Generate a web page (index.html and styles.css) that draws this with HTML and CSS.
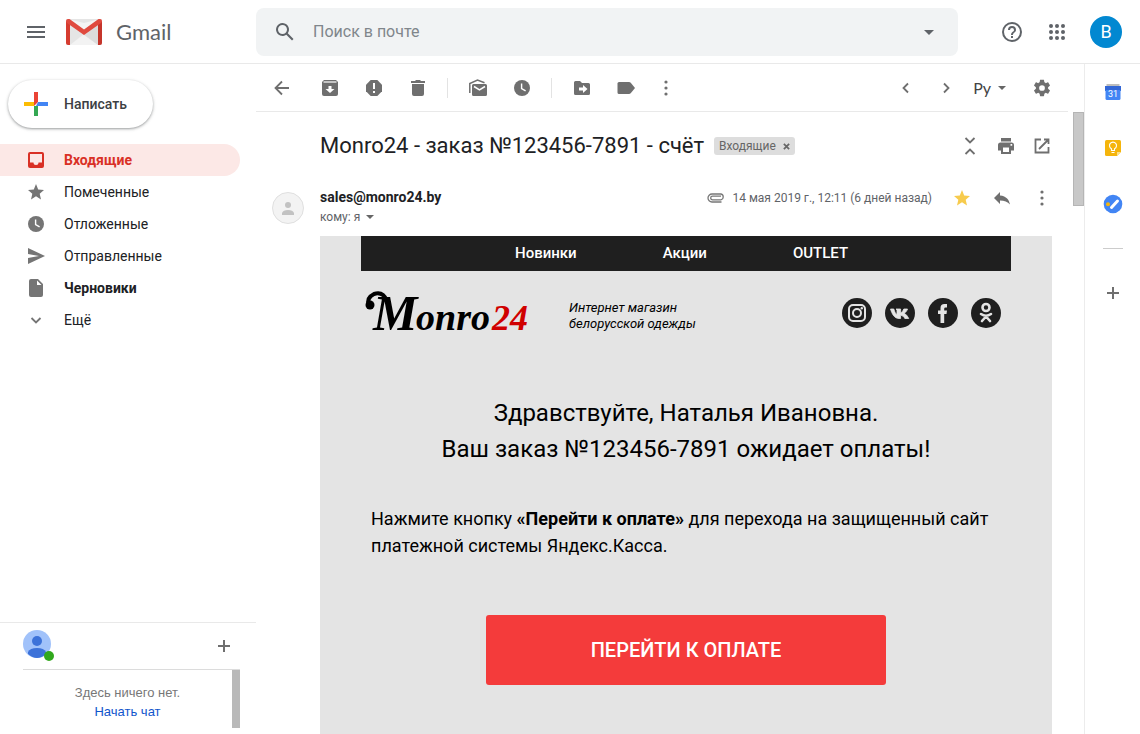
FILE: index.html
```html
<!DOCTYPE html>
<html lang="ru">
<head>
<meta charset="utf-8">
<title>Gmail</title>
<link rel="stylesheet" href="styles.css">
</head>
<body>
<svg class="sprite" aria-hidden="true">
  <symbol id="i-dots" viewBox="0 0 20 20"><circle cx="10" cy="4" r="1.6"/><circle cx="10" cy="10" r="1.6"/><circle cx="10" cy="16" r="1.6"/></symbol>
  <symbol id="i-clock" viewBox="0 0 20 20"><circle cx="10" cy="10" r="8"/><path d="M9.6 5.5v5l4 2.4" fill="none" stroke="#fff" stroke-width="1.4"/></symbol>
  <symbol id="i-star" viewBox="0 0 20 20"><path d="M10 14.300l5 3.200-1.300-5.700L18 8l-5.800-.5L10 2 7.800 7.500 2 8l4.300 3.800L5 17.500z"/></symbol>
  <symbol id="i-caret" viewBox="0 0 10 10"><path d="M1 3h8L5 7z"/></symbol>
  <symbol id="i-plus" viewBox="0 0 20 20"><path d="M9 4h2v5h5v2h-5v5H9v-5H4V9h5z"/></symbol>
</svg>

<header class="header">
  <div class="brand">
    <button class="icon-btn" aria-label="Главное меню"><svg class="icon-24" viewBox="0 0 24 24"><path d="M3 18h18v-2H3v2zm0-5h18v-2H3v2zm0-7v2h18V6H3z"/></svg></button>
    <a class="logo" href="#">
      <svg class="logo-mark" viewBox="0 0 36 26">
        <rect width="36" height="26" rx="2" fill="#e5e5e5"/>
        <path d="M4 26L18 15l14 11z" fill="#f3f3f3"/><path d="M4 6l14 10L32 6v20z" fill="#d8d8d8" opacity=".7"/>
        <path d="M2 0h1.500L18 11 32.500 0H34L18 4z" fill="#f4f4f4"/>
        <path d="M0 2v22a2 2 0 0 0 2 2h2V4z" fill="#d63c30"/><path d="M36 2v22a2 2 0 0 1-2 2h-2V4z" fill="#c5352b"/>
        <path d="M0 2Q0 0 2 0h1.500L18 10.500 32.500 0H34q2 0 2 2 0 1.200-1 2L18 16 1 4Q0 3.200 0 2z" fill="#e04a3f"/>
      </svg>
      <span>Gmail</span>
    </a>
  </div>
  <form class="search">
    <button type="button" class="icon-btn" aria-label="Поиск"><svg class="icon-24" viewBox="0 0 24 24"><path d="M20.500 19l-5.700-5.700A6.500 6.500 0 1 0 13.300 14.800l5.700 5.700 1.500-1.500zM9.500 14a4.500 4.500 0 1 1 0-9 4.500 4.500 0 0 1 0 9z"/></svg></button>
    <input type="text" placeholder="Поиск в почте" aria-label="Поиск в почте">
    <button type="button" class="icon-btn" aria-label="Параметры поиска"><svg class="icon-24" viewBox="0 0 24 24"><path d="M7 10l5 5 5-5z"/></svg></button>
  </form>
  <div class="account">
    <button class="icon-btn" aria-label="Справка"><svg class="icon-24" viewBox="0 0 24 24"><path d="M11 18h2v-2h-2v2zm1-16a10 10 0 1 0 0 20 10 10 0 0 0 0-20zm0 18a8 8 0 1 1 0-16 8 8 0 0 1 0 16zm0-14a4 4 0 0 0-4 4h2a2 2 0 1 1 4 0c0 2-3 1.750-3 5h2c0-2.250 3-2.500 3-5a4 4 0 0 0-4-4z"/></svg></button>
    <button class="icon-btn" aria-label="Приложения"><svg class="icon-24" viewBox="0 0 24 24"><circle cx="6" cy="6" r="2"/><circle cx="12" cy="6" r="2"/><circle cx="18" cy="6" r="2"/><circle cx="6" cy="12" r="2"/><circle cx="12" cy="12" r="2"/><circle cx="18" cy="12" r="2"/><circle cx="6" cy="18" r="2"/><circle cx="12" cy="18" r="2"/><circle cx="18" cy="18" r="2"/></svg></button>
    <button class="avatar">B</button>
  </div>
</header>

<div class="layout">
  <aside class="sidebar">
    <button class="compose">
      <svg class="icon-24" viewBox="0 0 24 24"><path fill="#ea4335" d="M10 0h4v10l-4 4z"/><path fill="#4285f4" d="M14 10h10v4H12z"/><path fill="#34a853" d="M10 14h4v10h-4z"/><path fill="#fbbc04" d="M0 10h10v4H0z"/></svg>
      <span>Написать</span>
    </button>
    <nav class="folders">
      <a class="folder folder-active" href="#"><svg class="icon" viewBox="0 0 20 20"><path fill-rule="evenodd" d="M4 2h12a2 2 0 0 1 2 2v12a2 2 0 0 1-2 2H4a2 2 0 0 1-2-2V4a2 2 0 0 1 2-2zm0 2v8.500h3.500a2.500 2.500 0 0 0 5 0H16V4z"/></svg>Входящие</a>
      <a class="folder" href="#"><svg class="icon"><use href="#i-star"/></svg>Помеченные</a>
      <a class="folder" href="#"><svg class="icon"><use href="#i-clock"/></svg>Отложенные</a>
      <a class="folder" href="#"><svg class="icon" viewBox="0 0 20 20"><path d="M2 2l17 8-17 8v-6l11-2L2 8z"/></svg>Отправленные</a>
      <a class="folder folder-unread" href="#"><svg class="icon" viewBox="0 0 20 20"><path fill-rule="evenodd" d="M5 1h7l5 5v11a2 2 0 0 1-2 2H5a2 2 0 0 1-2-2V3a2 2 0 0 1 2-2zm6 1.500V7h4.500z"/></svg>Черновики</a>
      <a class="folder" href="#"><svg class="icon line-icon" viewBox="0 0 20 20"><path d="M5.500 8l4.500 4.500L14.500 8"/></svg>Ещё</a>
    </nav>
    <section class="chat">
      <div class="chat-head">
        <svg class="chat-avatar" viewBox="0 0 32 32"><circle cx="14" cy="14" r="14" fill="#a1c2fa"/><circle cx="14" cy="11" r="5" fill="#3c72d9"/><path d="M5 24v-2q2-4 9-4t9 4v2q-9 8-18 0z" fill="#3c72d9"/><circle cx="26" cy="26" r="5" fill="#31a81d"/></svg>
        <button class="icon-btn" aria-label="Новый чат"><svg class="icon"><use href="#i-plus"/></svg></button>
      </div>
      <div class="chat-body">
        <p class="chat-empty">Здесь ничего нет.<br><a href="#">Начать чат</a></p>
        <div class="chat-scroll"></div>
      </div>
    </section>
  </aside>

  <main class="content">
    <div class="toolbar">
      <button class="icon-btn tool-back" aria-label="Назад"><svg class="icon line-icon" viewBox="0 0 20 20"><path d="M17 10H4M10 3.500L3.500 10l6.500 6.500"/></svg></button>
      <div class="tool-group">
        <button class="icon-btn" aria-label="В архив"><svg class="icon" viewBox="0 0 20 20"><path d="M4 2h12l2 2v12a2 2 0 0 1-2 2H4a2 2 0 0 1-2-2V4z"/><path d="M8.500 8h3v3h3L10 15l-4.500-4h3z" fill="#fff"/><path d="M3.500 4h13" stroke="#fff" stroke-width="1.200"/></svg></button>
        <button class="icon-btn" aria-label="В спам"><svg class="icon" viewBox="0 0 20 20"><path d="M6.700 2h6.600L18 6.700v6.600L13.300 18H6.700L2 13.300V6.700z"/><path d="M9 5h2v6H9zm0 8h2v2H9z" fill="#fff"/></svg></button>
        <button class="icon-btn" aria-label="Удалить"><svg class="icon" viewBox="0 0 20 20"><path d="M4 6h12v10a2 2 0 0 1-2 2H6a2 2 0 0 1-2-2zM3 3h4l1-1h4l1 1h4v2H3z"/></svg></button>
      </div>
      <div class="tool-group">
        <button class="icon-btn" aria-label="Отметить как непрочитанное"><svg class="icon" viewBox="0 0 20 20"><path d="M5.500 6h12A1.500 1.500 0 0 1 19 7.500v9a1.500 1.500 0 0 1-1.500 1.500h-12A1.500 1.500 0 0 1 4 16.500v-9A1.500 1.500 0 0 1 5.500 6z"/><path d="M6 8.500l5.500 3.300L17 8.500" fill="none" stroke="#fff" stroke-width="1.500"/><path d="M1.800 15V5.500L9.500 2l7 2.800" fill="none" stroke="#6f6f6f" stroke-width="1.500"/></svg></button>
        <button class="icon-btn" aria-label="Отложить"><svg class="icon"><use href="#i-clock"/></svg></button>
      </div>
      <div class="tool-group">
        <button class="icon-btn" aria-label="Переместить"><svg class="icon" viewBox="0 0 20 20"><path d="M3.500 3H8l2 2h6.500A1.500 1.500 0 0 1 18 6.500v9a1.500 1.500 0 0 1-1.500 1.500h-13A1.500 1.500 0 0 1 2 15.500v-11A1.500 1.500 0 0 1 3.500 3z"/><path d="M7 9.500h4V7l4.500 4-4.500 4v-2.500H7z" fill="#fff"/></svg></button>
        <button class="icon-btn" aria-label="Ярлыки"><svg class="icon" viewBox="0 0 20 20"><path d="M3 4h10q1 0 1.700.8L19 10l-4.300 5.200Q14 16 13 16H3q-1.500 0-1.500-1.500v-9Q1.500 4 3 4z"/></svg></button>
      </div>
      <button class="icon-btn tool-more" aria-label="Ещё"><svg class="icon"><use href="#i-dots"/></svg></button>
      <div class="pager">
        <button class="icon-btn" aria-label="Предыдущее"><svg class="icon line-icon" viewBox="0 0 20 20"><path d="M12 5.500L7.500 10l4.500 4.500"/></svg></button>
        <button class="icon-btn" aria-label="Следующее"><svg class="icon line-icon" viewBox="0 0 20 20"><path d="M8 5.500l4.500 4.500L8 14.500"/></svg></button>
      </div>
      <button class="language">Ру<svg class="caret"><use href="#i-caret"/></svg></button>
      <button class="icon-btn" aria-label="Настройки"><svg class="icon" viewBox="1 1 22 22"><path d="M19.430 12.980c.040-.320.070-.640.070-.980s-.030-.660-.070-.980l2.110-1.650c.190-.150.240-.420.120-.640l-2-3.460c-.120-.220-.390-.300-.610-.220l-2.490 1c-.520-.400-1.080-.730-1.690-.980l-.380-2.650C14.460 2.180 14.250 2 14 2h-4c-.250 0-.460.180-.490.420l-.380 2.650c-.610.250-1.170.590-1.690.980l-2.490-1c-.230-.090-.490 0-.610.220l-2 3.460c-.130.220-.070.490.120.640l2.110 1.650c-.040.320-.070.650-.070.980s.030.660.070.980l-2.110 1.650c-.190.150-.240.420-.120.640l2 3.460c.120.220.390.300.610.220l2.490-1c.520.400 1.080.730 1.690.980l.380 2.650c.030.240.240.420.490.420h4c.250 0 .460-.180.490-.420l.380-2.650c.610-.250 1.170-.590 1.690-.980l2.490 1c.230.090.490 0 .610-.220l2-3.460c.120-.220.070-.490-.120-.640l-2.110-1.650zM12 15.500a3.500 3.500 0 1 1 0-7 3.500 3.500 0 0 1 0 7z" transform="translate(1.200 1.200) scale(.9)"/></svg></button>
    </div>

    <div class="mail">
      <article class="thread">
        <div class="subject-row">
          <h1 class="subject">Monro24 - заказ №123456-7891 - счёт</h1>
          <span class="chip">Входящие<button class="chip-close" aria-label="Удалить ярлык"><svg viewBox="0 0 8 8"><path d="M1 1l6 6M7 1L1 7"/></svg></button></span>
          <div class="subject-actions">
            <button class="icon-btn" aria-label="Свернуть"><svg class="icon line-icon" viewBox="0 0 20 20"><path d="M5.500 2l4.500 4.500L14.500 2M5.500 18l4.500-4.500 4.500 4.500"/></svg></button>
            <button class="icon-btn" aria-label="Печать"><svg class="icon" viewBox="0 0 20 20"><path fill-rule="evenodd" d="M5 2h10v3.500H5zM4.500 6.500h11A2.500 2.500 0 0 1 18 9v5.500h-3V18H5v-3.500H2V9a2.500 2.500 0 0 1 2.500-2.500zM7 11.500V16h6v-4.500zM14.500 8v1.700h1.700V8z"/></svg></button>
            <button class="icon-btn" aria-label="В новом окне"><svg class="icon line-icon" viewBox="0 0 20 20"><path d="M9 3.500H3.500v13h13V11M12 3.500h4.500V8M16.500 3.500L7 13"/></svg></button>
          </div>
        </div>

        <div class="sender-row">
          <svg class="sender-avatar" viewBox="0 0 32 32"><circle cx="16" cy="16" r="15.500" fill="#f3f3f3" stroke="#dfdfdf"/><circle cx="16" cy="13" r="3" fill="#c2c2c2"/><path d="M10 23v-2q1-3 6-3t6 3v2z" fill="#c2c2c2"/></svg>
          <div class="sender">
            <strong>sales@monro24.by</strong>
            <button class="recipient">кому: я<svg class="caret"><use href="#i-caret"/></svg></button>
          </div>
          <div class="meta">
            <svg class="clip" viewBox="0 0 18 10"><path d="M14 6.800H5.500a1.800 1.800 0 0 1 0-3.600H14M14.500 9H5a4 4 0 0 1 0-8h9a3 3 0 0 1 0 5.800"/></svg>
            <time datetime="2019-05-14T12:11">14 мая 2019 г., 12:11 (6 дней назад)</time>
          </div>
          <div class="sender-actions">
            <button class="icon-btn starred" aria-label="Снять пометку"><svg class="icon"><use href="#i-star"/></svg></button>
            <button class="icon-btn" aria-label="Ответить"><svg class="icon" viewBox="0 0 20 20"><path d="M8 7.500V4L2 10l6 6v-3.600c4.500 0 7.500 1.200 10 4.200-.800-4.600-3.500-8.600-10-9.100z"/></svg></button>
            <button class="icon-btn" aria-label="Ещё"><svg class="icon"><use href="#i-dots"/></svg></button>
          </div>
        </div>

        <div class="letter">
          <div class="letter-inner">
            <nav class="shop-nav"><a href="#">Новинки</a><a href="#">Акции</a><a href="#">OUTLET</a></nav>
            <div class="shop-head">
              <a class="shop-logo" href="#"><svg viewBox="0 -10 170 70" role="img" aria-label="Monro24"><path d="M24 13Q20 3 11 6Q3 10 6 17" fill="none" stroke="#000" stroke-width="4"/><circle cx="7" cy="17" r="4.500"/><text class="logo-cap" x="10" y="42">M</text><text class="logo-word" x="53" y="42">onro</text><text class="logo-num" x="129" y="42">24</text></svg></a>
              <p class="tagline">Интернет магазин<br>белорусской одежды</p>
              <div class="social">
                <a href="#" aria-label="Instagram"><svg viewBox="0 0 30 30"><circle cx="15" cy="15" r="15"/><g fill="none" stroke="#e4e4e4" stroke-width="2"><rect x="7" y="7" width="16" height="16" rx="4"/><circle cx="15" cy="15" r="4"/></g><circle cx="19.800" cy="10.200" r="1.200" fill="#e4e4e4"/></svg></a>
                <a href="#" aria-label="ВКонтакте"><svg viewBox="0 0 30 30"><circle cx="15" cy="15" r="15"/><path fill="#e4e4e4" stroke="#e4e4e4" stroke-width=".8" stroke-linejoin="round" d="M14 20.500C9.500 20.500 7 16 5.500 11h3.300c.8 3 2 5 3.200 5.600V12l-1-1h4.600v3.800c1.400-.5 2.500-2 3.200-3.800h3.700c-.6 2-1.800 3.300-3.200 4.300 1.700 1 3.200 2.700 4.400 5.200h-3.900c-.8-1.800-2.200-3-4.200-3.200v3.200z"/></svg></a>
                <a href="#" aria-label="Facebook"><svg viewBox="0 0 30 30"><circle cx="15" cy="15" r="15"/><path fill="#e4e4e4" d="M12.500 25v-9H10v-3.500h2.500V10q0-4 4-4H19v3.500h-1.500q-1.300 0-1.300 1.300v1.700H19l-.5 3.500h-2.300v9z"/></svg></a>
                <a href="#" aria-label="Одноклассники"><svg viewBox="0 0 30 30"><circle cx="15" cy="15" r="15"/><g fill="none" stroke="#e4e4e4" stroke-width="2.600" stroke-linecap="round"><circle cx="15" cy="9.500" r="3.500"/><path d="M10 16q5 3.500 10 0M15 18.500l-4 4.500M15 18.500l4 4.500"/></g></svg></a>
              </div>
            </div>
            <h2 class="greeting">Здравствуйте, Наталья Ивановна.<br>Ваш заказ №123456-7891 ожидает оплаты!</h2>
            <p class="note">Нажмите кнопку <b>«Перейти к оплате»</b> для перехода на защищенный сайт платежной системы Яндекс.Касса.</p>
            <a class="pay" href="#">ПЕРЕЙТИ К ОПЛАТЕ</a>
          </div>
        </div>
      </article>
      <div class="mail-scroll"><div class="mail-thumb"></div></div>
    </div>
  </main>

  <aside class="addons">
    <button class="icon-btn" aria-label="Календарь"><svg class="icon" viewBox="0 0 20 20"><path d="M3.500 2h13v3h-13z" fill="#bdbdbd"/><path d="M2 4h16v5H2z" fill="#3367d6"/><path d="M2.500 8h15v8.500a1.500 1.500 0 0 1-1.500 1.500H4a1.500 1.500 0 0 1-1.500-1.500z" fill="#4285f4"/><text class="cal-day" x="10" y="15" text-anchor="middle">31</text></svg></button>
    <button class="icon-btn" aria-label="Keep"><svg class="icon" viewBox="0 0 20 20"><path d="M3.500 2h13A1.500 1.500 0 0 1 18 3.500V14l-4 4H3.500A1.500 1.500 0 0 1 2 16.500v-13A1.500 1.500 0 0 1 3.500 2z" fill="#f5b50c"/><path d="M18 14l-4 4v-4z" fill="#fbe08a"/><path d="M8.500 12.500v-1.700a3.500 3.500 0 1 1 3 0v1.700zM8.500 14.500h3" fill="none" stroke="#fff" stroke-width="1.100"/></svg></button>
    <button class="icon-btn" aria-label="Задачи"><svg class="icon" viewBox="0 0 20 20"><circle cx="10" cy="10" r="9.300" fill="#4285f4"/><path d="M8.500 13.500l6-6.500" stroke="#fff" stroke-width="3" stroke-linecap="round"/><circle cx="5" cy="10.300" r="2" fill="#f5b50c"/></svg></button>
    <hr>
    <button class="icon-btn" aria-label="Установить дополнения"><svg class="icon"><use href="#i-plus"/></svg></button>
  </aside>
</div>
</body>
</html>
```
FILE: styles.css
```css
* { box-sizing: border-box; }
body {
  margin: 0;
  height: 100vh;
  display: flex;
  flex-direction: column;
  overflow: hidden;
  background: #fff;
  color: #202124;
  font: 14px/20px Roboto, "Liberation Sans", sans-serif;
}
h1, h2, p { margin: 0; font-weight: 400; }
a { color: inherit; text-decoration: none; }
button { margin: 0; padding: 0; border: 0; background: none; font: inherit; color: inherit; }
svg { display: block; flex: none; fill: currentColor; }
.sprite { display: none; }
.icon { width: 20px; height: 20px; }
.icon-24 { width: 24px; height: 24px; }
.line-icon { fill: none; stroke: currentColor; stroke-width: 1.8; }
.icon-btn { display: block; flex: none; color: #6f6f6f; }
.caret { width: 10px; height: 10px; color: #666; }

.header {
  flex: none;
  display: flex;
  align-items: center;
  height: 64px;
  border-bottom: 1px solid #e9e9e9;
}
.header .icon-btn { color: #5f6368; }
.brand { flex: none; width: 256px; display: flex; align-items: center; gap: 18px; padding-left: 24px; }
.logo { display: flex; align-items: center; gap: 14px; color: #5f6368; font: 22px/28px Lato, Roboto, sans-serif; }
.logo-mark { width: 36px; height: 26px; }
.search {
  flex: 1;
  display: flex;
  align-items: center;
  gap: 16px;
  height: 48px;
  padding: 0 17px;
  border-radius: 8px;
  background: #f1f3f4;
}
.search input {
  flex: 1;
  min-width: 0;
  padding: 0;
  border: 0;
  outline: 0;
  background: none;
  color: #202124;
  font: 16px/24px Roboto, sans-serif;
}
.search input::placeholder { color: #80868b; opacity: 1; }
.account { flex: none; display: flex; align-items: center; gap: 21px; padding: 0 18px 0 42px; }
.avatar {
  width: 32px;
  height: 32px;
  border-radius: 50%;
  background: #0288d1;
  color: #fff;
  font-size: 18px;
}

.layout { flex: 1; min-height: 0; display: flex; }

.sidebar { flex: none; width: 256px; display: flex; flex-direction: column; }
.compose {
  align-self: flex-start;
  display: flex;
  align-items: center;
  gap: 16px;
  height: 48px;
  margin: 16px 8px;
  padding: 0 26px 0 16px;
  border-radius: 24px;
  background: #fff;
  box-shadow: 0 1px 2px rgba(60, 64, 67, .35), 0 1px 3px 1px rgba(60, 64, 67, .15);
  color: #3c4043;
  font: 500 14px/20px Roboto, sans-serif;
}
.folder {
  display: flex;
  align-items: center;
  gap: 18px;
  height: 32px;
  margin-right: 16px;
  padding-left: 26px;
  border-radius: 0 16px 16px 0;
}
.folder .icon { color: #757575; }
.folder-active { background: #fce8e6; color: #d93025; font-weight: 700; }
.folder-active .icon { color: #d93025; }
.folder-unread { font-weight: 700; }

.chat { margin-top: auto; padding: 0 16px 6px 23px; border-top: 1px solid #e9e9e9; }
.chat-head {
  display: flex;
  align-items: center;
  justify-content: space-between;
  height: 47px;
  padding-right: 6px;
  border-bottom: 1px solid #dcdcdc;
}
.chat-avatar { width: 32px; height: 32px; }
.chat-body { display: flex; }
.chat-empty {
  flex: 1;
  padding: 13px 0 7px;
  text-align: center;
  color: #777;
  font: 13px/19px "Liberation Sans", sans-serif;
}
.chat-empty a { color: #15c; }
.chat-scroll { width: 8px; background: #b9b9b9; }

.content { flex: 1; min-width: 0; display: flex; flex-direction: column; }
.toolbar {
  flex: none;
  display: flex;
  align-items: center;
  height: 48px;
  margin-right: 16px;
  padding: 0 16px;
  border-bottom: 1px solid #e9e9e9;
}
.tool-back { margin-right: 28px; }
.tool-group { display: flex; gap: 24px; }
.tool-group + .tool-group { margin-left: 19px; padding-left: 20px; border-left: 1px solid #e3e3e3; }
.tool-more { margin-left: 20px; }
.pager { display: flex; gap: 20px; margin-left: auto; }
.language {
  display: flex;
  align-items: center;
  gap: 6px;
  margin: 0 25px 0 17px;
  color: #444;
  font: 16px/20px Lato, Roboto, sans-serif;
}

.mail { flex: 1; min-height: 0; display: flex; overflow: hidden; }
.thread { flex: 1; min-width: 0; padding: 0 21px 0 16px; }
.subject-row { display: flex; align-items: center; height: 68px; padding-left: 48px; }
.subject { font: 22px/28px Roboto, sans-serif; white-space: nowrap; }
.chip {
  display: flex;
  align-items: center;
  gap: 7px;
  margin-left: 10px;
  padding: 0 5px;
  border-radius: 3px;
  background: #ddd;
  color: #666;
  font-size: 12px;
  line-height: 18px;
}
.chip-close svg { width: 7px; height: 7px; fill: none; stroke: #666; stroke-width: 2; }
.subject-actions { display: flex; gap: 16px; margin-left: auto; }
.sender-row { display: flex; align-items: flex-start; min-height: 56px; padding-top: 7px; }
.sender-avatar { width: 32px; height: 32px; margin: 5px 16px 0 0; }
.sender { display: flex; flex-direction: column; align-items: flex-start; }
.recipient { display: flex; align-items: center; gap: 5px; color: #5f6368; font-size: 12px; }
.meta { display: flex; align-items: center; gap: 7px; margin-left: auto; color: #5f6368; font-size: 12px; line-height: 22px; }
.clip { width: 18px; height: 10px; fill: none; stroke: #777; stroke-width: 1.3; }
.sender-actions { display: flex; gap: 20px; margin: 1px 0 0 20px; }
.starred { color: #f7cb4d; }

.letter { margin-left: 48px; padding: 0 41px; min-height: 600px; background: #e4e4e4; color: #000; }
.letter-inner { max-width: 650px; margin: 0 auto; }
.shop-nav {
  display: flex;
  gap: 86px;
  height: 35px;
  padding-left: 154px;
  background: #1f1f1f;
  color: #fff;
  font-size: 15px;
  font-weight: 500;
  line-height: 34px;
}
.shop-head { display: flex; align-items: center; height: 84px; padding: 0 10px 0 2px; }
.shop-logo svg { width: 170px; height: 70px; }
.shop-logo text { font-family: "Liberation Serif", serif; font-style: italic; font-weight: 700; }
.logo-cap { font-size: 50px; }
.logo-word { font-size: 38px; }
.logo-num { font-size: 36px; fill: #d00000; }
.tagline { margin-left: 36px; padding-top: 6px; font-size: 13px; font-style: italic; line-height: 16px; }
.social { display: flex; gap: 13px; margin-left: auto; color: #1f1f1f; }
.social svg { width: 30px; height: 30px; }
.greeting { padding-top: 40px; text-align: center; font-size: 24px; line-height: 36px; }
.note { padding: 38px 10px 0; font-size: 18px; line-height: 27px; }
.pay {
  display: block;
  max-width: 400px;
  margin: 56px auto 0;
  border-radius: 3px;
  background: #f43b3b;
  color: #fff;
  text-align: center;
  font-size: 20px;
  font-weight: 500;
  line-height: 70px;
}
.mail-scroll { flex: none; width: 11px; }
.mail-thumb { height: 94px; background: #c8c8c8; border: 1px solid #b5b5b5; }

.addons {
  flex: none;
  width: 56px;
  display: flex;
  flex-direction: column;
  align-items: center;
  gap: 36px;
  padding-top: 18px;
  border-left: 1px solid #ececec;
}
.addons hr { width: 20px; margin: -2px 0; border: 0; border-top: 1px solid #ccc; }
.cal-day { font: 9px Roboto, sans-serif; fill: #fff; }
```
